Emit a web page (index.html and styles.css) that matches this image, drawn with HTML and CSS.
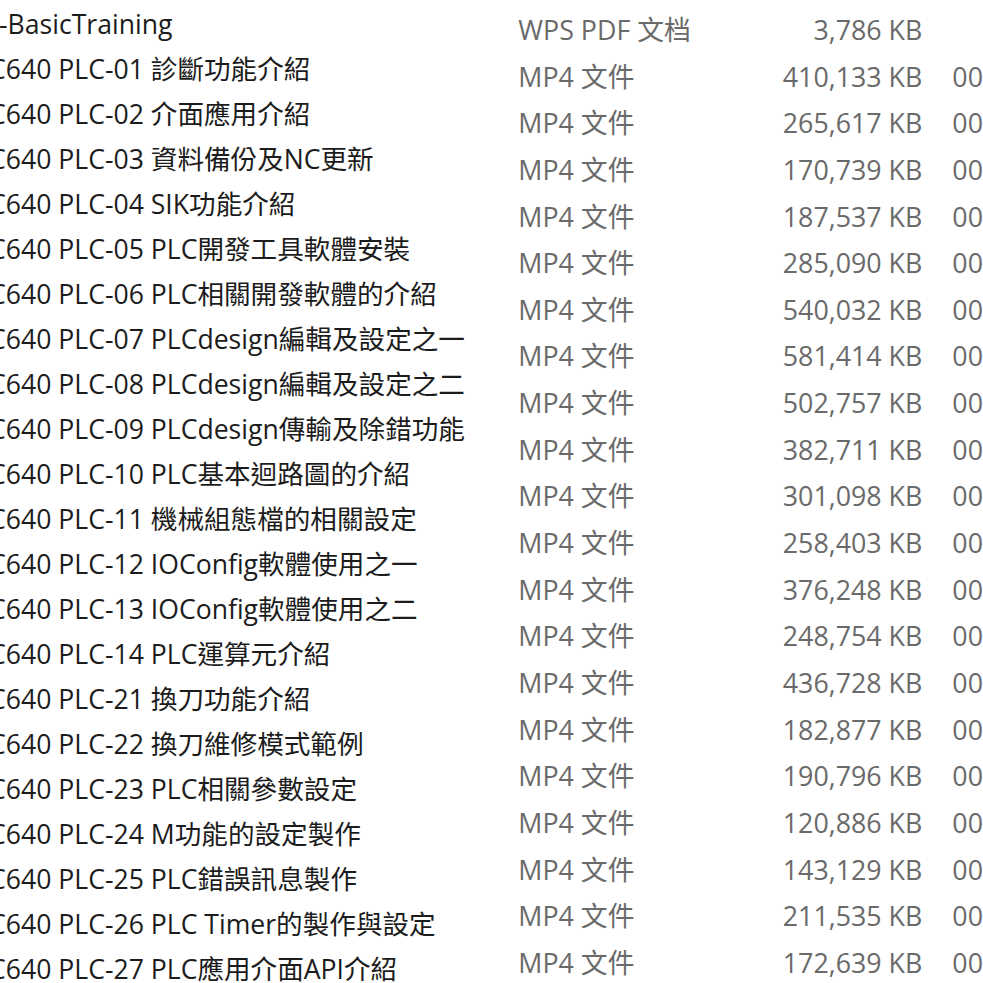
FILE: index.html
```html
<!DOCTYPE html>
<html lang="zh-Hant">
<head>
<meta charset="utf-8">
<title>BasicTraining</title>
<link rel="stylesheet" href="styles.css">
</head>
<body>
<div class="list">
  <div class="col names">
    <div class="name first">-BasicTraining</div>
    <div class="name">C640 PLC-01 診斷功能介紹</div>
    <div class="name">C640 PLC-02 介面應用介紹</div>
    <div class="name">C640 PLC-03 資料備份及NC更新</div>
    <div class="name">C640 PLC-04 SIK功能介紹</div>
    <div class="name">C640 PLC-05 PLC開發工具軟體安裝</div>
    <div class="name">C640 PLC-06 PLC相關開發軟體的介紹</div>
    <div class="name">C640 PLC-07 PLCdesign編輯及設定之一</div>
    <div class="name">C640 PLC-08 PLCdesign編輯及設定之二</div>
    <div class="name">C640 PLC-09 PLCdesign傳輸及除錯功能</div>
    <div class="name">C640 PLC-10 PLC基本迴路圖的介紹</div>
    <div class="name">C640 PLC-11 機械組態檔的相關設定</div>
    <div class="name">C640 PLC-12 IOConfig軟體使用之一</div>
    <div class="name">C640 PLC-13 IOConfig軟體使用之二</div>
    <div class="name">C640 PLC-14 PLC運算元介紹</div>
    <div class="name">C640 PLC-21 換刀功能介紹</div>
    <div class="name">C640 PLC-22 換刀維修模式範例</div>
    <div class="name">C640 PLC-23 PLC相關參數設定</div>
    <div class="name">C640 PLC-24 M功能的設定製作</div>
    <div class="name">C640 PLC-25 PLC錯誤訊息製作</div>
    <div class="name">C640 PLC-26 PLC Timer的製作與設定</div>
    <div class="name">C640 PLC-27 PLC應用介面API介紹</div>
  </div>
  <div class="col details">
    <div class="row"><span class="type">WPS PDF 文档</span><span class="size">3,786 KB</span><span class="date"></span></div>
    <div class="row"><span class="type">MP4 文件</span><span class="size">410,133 KB</span><span class="date">00</span></div>
    <div class="row"><span class="type">MP4 文件</span><span class="size">265,617 KB</span><span class="date">00</span></div>
    <div class="row"><span class="type">MP4 文件</span><span class="size">170,739 KB</span><span class="date">00</span></div>
    <div class="row"><span class="type">MP4 文件</span><span class="size">187,537 KB</span><span class="date">00</span></div>
    <div class="row"><span class="type">MP4 文件</span><span class="size">285,090 KB</span><span class="date">00</span></div>
    <div class="row"><span class="type">MP4 文件</span><span class="size">540,032 KB</span><span class="date">00</span></div>
    <div class="row"><span class="type">MP4 文件</span><span class="size">581,414 KB</span><span class="date">00</span></div>
    <div class="row"><span class="type">MP4 文件</span><span class="size">502,757 KB</span><span class="date">00</span></div>
    <div class="row"><span class="type">MP4 文件</span><span class="size">382,711 KB</span><span class="date">00</span></div>
    <div class="row"><span class="type">MP4 文件</span><span class="size">301,098 KB</span><span class="date">00</span></div>
    <div class="row"><span class="type">MP4 文件</span><span class="size">258,403 KB</span><span class="date">00</span></div>
    <div class="row"><span class="type">MP4 文件</span><span class="size">376,248 KB</span><span class="date">00</span></div>
    <div class="row"><span class="type">MP4 文件</span><span class="size">248,754 KB</span><span class="date">00</span></div>
    <div class="row"><span class="type">MP4 文件</span><span class="size">436,728 KB</span><span class="date">00</span></div>
    <div class="row"><span class="type">MP4 文件</span><span class="size">182,877 KB</span><span class="date">00</span></div>
    <div class="row"><span class="type">MP4 文件</span><span class="size">190,796 KB</span><span class="date">00</span></div>
    <div class="row"><span class="type">MP4 文件</span><span class="size">120,886 KB</span><span class="date">00</span></div>
    <div class="row"><span class="type">MP4 文件</span><span class="size">143,129 KB</span><span class="date">00</span></div>
    <div class="row"><span class="type">MP4 文件</span><span class="size">211,535 KB</span><span class="date">00</span></div>
    <div class="row"><span class="type">MP4 文件</span><span class="size">172,639 KB</span><span class="date">00</span></div>
  </div>
</div>
</body>
</html>
```
FILE: styles.css
```css
html, body {
  margin: 0;
  padding: 0;
  background: #ffffff;
  overflow: hidden;
}
body {
  width: 983px;
  height: 983px;
  font-family: "Open Sans", "Noto Sans CJK TC", sans-serif;
}
.list {
  display: flex;
  align-items: flex-start;
}
.col {
  display: flex;
  flex-direction: column;
}
.names {
  width: 533px;
  margin-left: -11px;
  padding-top: 2px;
  color: #1c1c1c;
  font-size: 26.6px;
}
.name {
  height: 45px;
  line-height: 45px;
  white-space: nowrap;
}
.name.first {
  padding-left: 10px;
}
.details {
  padding-top: 7px;
  color: #6a6a6a;
  font-size: 26.8px;
}
.row {
  display: flex;
  height: 46.65px;
  line-height: 46.65px;
  white-space: nowrap;
}
.type {
  width: 200px;
}
.size {
  width: 204px;
  text-align: right;
}
.date {
  margin-left: 30px;
}
```
